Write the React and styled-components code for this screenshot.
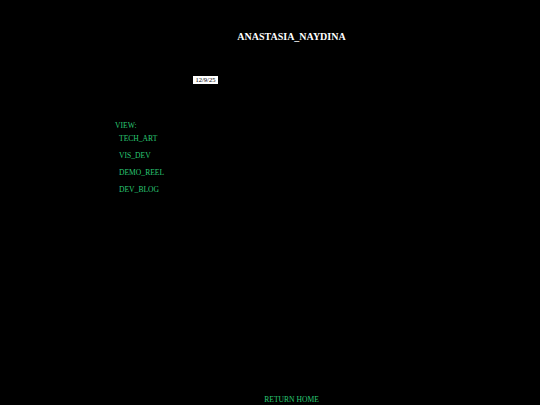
import React from 'react'
import styled, { createGlobalStyle } from 'styled-components'

const GREEN = '#2ac874'

const GlobalStyle = createGlobalStyle`
  html, body {
    margin: 0;
    padding: 0;
    background: #000;
  }
  body {
    font-family: "Liberation Serif", "Times New Roman", serif;
  }
`

const Page = styled.div`
  position: relative;
  width: 540px;
  height: 405px;
  background: #000;
  overflow: hidden;
  display: flex;
  flex-direction: column;
`

const Header = styled.header`
  padding: 30px 0 0 43px;
  display: flex;
  justify-content: center;
`

const Title = styled.h1`
  margin: 0;
  font-size: 10px;
  line-height: 13px;
  font-weight: bold;
  color: #fff;
`

const DateRow = styled.div`
  padding: 33px 0 0 193px;
  display: flex;
`

const DateTag = styled.span`
  background: #fff;
  color: #000;
  font-size: 6.5px;
  line-height: 8px;
  padding: 0 2px;
  width: 25px;
  box-sizing: border-box;
  text-align: center;
`

const Nav = styled.nav`
  padding: 37px 0 0 115px;
  display: flex;
  flex-direction: column;
`

const NavLabel = styled.div`
  color: ${GREEN};
  font-size: 7.6px;
  line-height: 10px;
`

const NavList = styled.ul`
  list-style: none;
  margin: 0;
  padding: 3px 0 0 4px;
  display: flex;
  flex-direction: column;
  gap: 7px;
`

const NavItem = styled.li`
  color: ${GREEN};
  font-size: 7.6px;
  line-height: 10px;
`

const Footer = styled.footer`
  margin-top: auto;
  padding: 0 0 0 43px;
  display: flex;
  justify-content: center;
`

const HomeLink = styled.a`
  color: ${GREEN};
  font-size: 7.6px;
  line-height: 10px;
  text-decoration: none;
`

const links = ['TECH_ART', 'VIS_DEV', 'DEMO_REEL', 'DEV_BLOG']

const App = () => (
  <>
    <GlobalStyle />
    <Page>
      <Header>
        <Title>ANASTASIA_NAYDINA</Title>
      </Header>
      <DateRow>
        <DateTag>12/9/25</DateTag>
      </DateRow>
      <Nav>
        <NavLabel>VIEW:</NavLabel>
        <NavList>
          {links.map((l) => (
            <NavItem key={l}>{l}</NavItem>
          ))}
        </NavList>
      </Nav>
      <Footer>
        <HomeLink href="#">RETURN HOME</HomeLink>
      </Footer>
    </Page>
  </>
)

export default App
